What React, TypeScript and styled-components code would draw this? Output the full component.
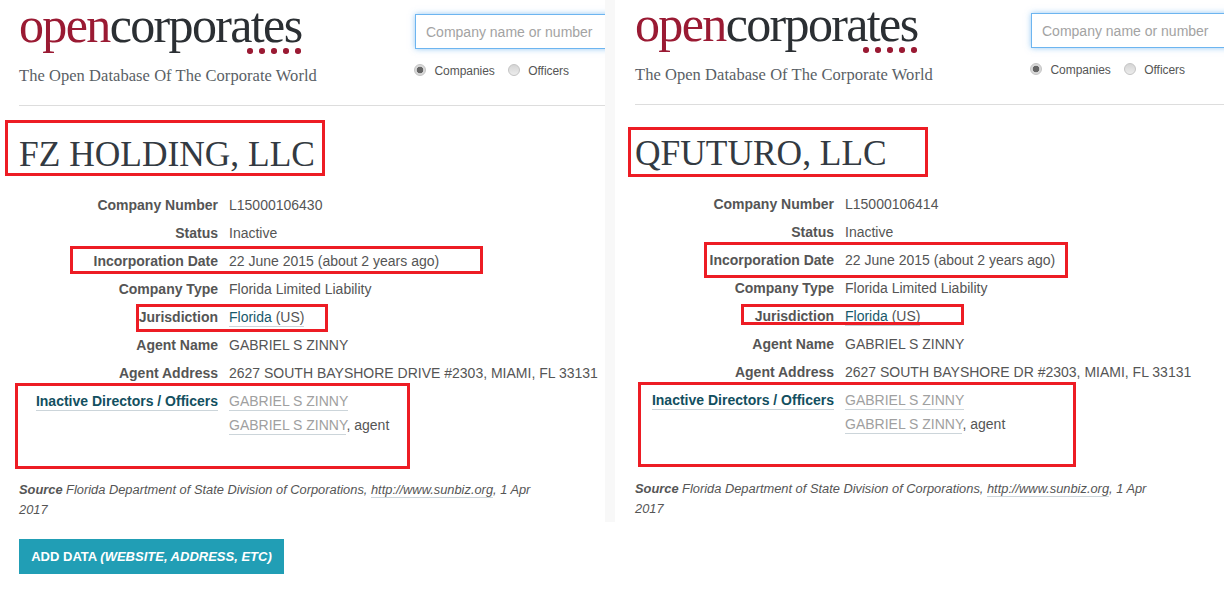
import React from 'react';
import styled, { createGlobalStyle } from 'styled-components';

type Row = { label: string; value: React.ReactNode };

// left, top, width, height of a marker drawn over the panel
type Box = [number, number, number, number];

type Company = {
  name: string;
  number: string;
  address: string;
  marks: Box[];
};

const companies: Company[] = [
  {
    name: 'FZ HOLDING, LLC',
    number: 'L15000106430',
    address: '2627 SOUTH BAYSHORE DRIVE #2303, MIAMI, FL 33131',
    marks: [
      [5, 120, 320, 56],
      [70, 246, 413, 28],
      [136, 304, 192, 28],
      [15, 383, 395, 86],
    ],
  },
  {
    name: 'QFUTURO, LLC',
    number: 'L15000106414',
    address: '2627 SOUTH BAYSHORE DR #2303, MIAMI, FL 33131',
    marks: [
      [13, 128, 300, 50],
      [89, 243, 364, 36],
      [126, 305, 223, 21],
      [23, 383, 438, 85],
    ],
  },
];

const CompanyPanel = ({ company, shifted }: { company: Company; shifted?: boolean }) => {
  const rows: Row[] = [
    { label: 'Company Number', value: company.number },
    { label: 'Status', value: 'Inactive' },
    { label: 'Incorporation Date', value: '22 June 2015 (about 2 years ago)' },
    { label: 'Company Type', value: 'Florida Limited Liability' },
    {
      label: 'Jurisdiction',
      value: (
        <JurisdictionLink>
          Florida <span>(US)</span>
        </JurisdictionLink>
      ),
    },
    { label: 'Agent Name', value: 'GABRIEL S ZINNY' },
    { label: 'Agent Address', value: company.address },
  ];

  return (
    <Panel $shifted={shifted}>
      <Header>
        <Brand>
          <Logo>
            <LogoOpen>open</LogoOpen>corporates
          </Logo>
          <LogoDots>
            <i />
            <i />
            <i />
            <i />
            <i />
          </LogoDots>
          <Tagline>The Open Database Of The Corporate World</Tagline>
        </Brand>
        <SearchArea>
          <SearchInput placeholder="Company name or number" readOnly />
          <RadioRow>
            <RadioLabel>
              <RadioDot $checked />
              Companies
            </RadioLabel>
            <RadioLabel>
              <RadioDot />
              Officers
            </RadioLabel>
          </RadioRow>
        </SearchArea>
      </Header>
      <Content>
        <Title>{company.name}</Title>
        <Attributes>
          {rows.map((row) => (
            <AttrRow key={row.label}>
              <AttrLabel>{row.label}</AttrLabel>
              <AttrValue>{row.value}</AttrValue>
            </AttrRow>
          ))}
          <AttrRow>
            <AttrLabel>
              <OfficersLink>Inactive Directors / Officers</OfficersLink>
            </AttrLabel>
            <OfficerList>
              <div>
                <OfficerLink>GABRIEL S ZINNY</OfficerLink>
              </div>
              <div>
                <OfficerLink>GABRIEL S ZINNY</OfficerLink>, agent
              </div>
            </OfficerList>
          </AttrRow>
        </Attributes>
        <Source>
          <strong>Source</strong> Florida Department of State Division of Corporations,{' '}
          <SourceLink>http://www.sunbiz.org</SourceLink>, 1 Apr
          <br />
          2017
        </Source>
      </Content>

      {company.marks.map(([left, top, width, height]) => (
        <RedBox key={top} $left={left} $top={top} $width={width} $height={height} />
      ))}
    </Panel>
  );
};

const App = () => (
  <>
    <GlobalStyle />
    <Page>
      <Columns>
        <CompanyPanel company={companies[0]} />
        <Gutter />
        <CompanyPanel company={companies[1]} shifted />
      </Columns>
      <AddDataButton>
        ADD DATA <em>(WEBSITE, ADDRESS, ETC)</em>
      </AddDataButton>
    </Page>
  </>
);

export default App;

const GlobalStyle = createGlobalStyle`
  html, body {
    margin: 0;
    padding: 0;
    background: #fff;
    overflow: hidden;
  }
  body {
    font-family: "Liberation Sans", Arial, sans-serif;
    font-size: 14px;
    color: #555;
  }
`;

const Page = styled.div`
  width: 1224px;
  height: 593px;
  overflow: hidden;
`;

const Columns = styled.div`
  display: grid;
  grid-template-columns: 605px 10px 609px;
  height: 522px;
`;

const Gutter = styled.div`
  background: #f8f8f8;
`;

const Panel = styled.section<{ $shifted?: boolean }>`
  position: relative;
  overflow: hidden;
  height: 522px;
  margin-top: ${(p) => (p.$shifted ? '-1px' : '0')};
  padding-left: ${(p) => (p.$shifted ? '1px' : '0')};
`;

const Header = styled.header`
  display: flex;
  justify-content: space-between;
  height: 105px;
  margin-left: 19px;
  border-bottom: 1px solid #ddd;
`;

const Brand = styled.div`
  display: flex;
  flex-direction: column;
  width: 396px;
  flex: none;
`;

const Logo = styled.div`
  font-family: "Liberation Serif", "Times New Roman", serif;
  font-size: 50px;
  line-height: 38px;
  margin: 6px 0 4px;
  letter-spacing: -1.64px;
  color: #2b2f33;
  white-space: nowrap;
`;

const LogoOpen = styled.span`
  color: #9a1a33;
`;

const LogoDots = styled.div`
  display: flex;
  gap: 6.6px;
  margin: 0 0 0 228px;
  height: 6px;

  i {
    display: block;
    width: 5.5px;
    height: 5.5px;
    border-radius: 50%;
    background: #9a1a33;
  }
`;

const Tagline = styled.div`
  font-family: "Liberation Serif", "Times New Roman", serif;
  font-size: 16.5px;
  line-height: 20px;
  margin-top: 12px;
  letter-spacing: 0.05px;
  color: #5a5f66;
  white-space: nowrap;
`;

const SearchArea = styled.div`
  flex: 1;
  padding-top: 14px;
  min-width: 210px;
`;

const SearchInput = styled.input`
  display: block;
  box-sizing: border-box;
  width: 260px;
  height: 35px;
  padding: 0 10px;
  border: 1px solid #6db5f0;
  box-shadow: 0 0 6px rgba(110, 180, 240, 0.7);
  outline: none;
  font-family: "Liberation Sans", Arial, sans-serif;
  font-size: 14px;
  color: #555;

  &::placeholder {
    color: #a3a3a3;
    opacity: 1;
  }
`;

const RadioRow = styled.div`
  display: flex;
  gap: 13px;
  margin: 15px 0 0 -1px;
`;

const RadioLabel = styled.label`
  display: flex;
  align-items: center;
  gap: 8.5px;
  font-size: 12px;
  line-height: 14px;
  letter-spacing: -0.05px;
  color: #555;
`;

const RadioDot = styled.span<{ $checked?: boolean }>`
  position: relative;
  top: -1.5px;
  display: block;
  width: 12px;
  height: 12px;
  box-sizing: border-box;
  border-radius: 50%;
  border: 1px solid #c4c4c4;
  background: ${(p) =>
    p.$checked
      ? 'radial-gradient(circle, #666 0 3px, #d8d8d8 3.6px)'
      : 'linear-gradient(#d5d5d5, #ececec)'};
`;

const Content = styled.div`
  padding-left: 19px;
`;

const Title = styled.h1`
  margin: 26px 0 0;
  font-family: "Liberation Serif", "Times New Roman", serif;
  font-size: 35.4px;
  line-height: 44px;
  font-weight: 400;
  color: #333a42;
  white-space: nowrap;
`;

const Attributes = styled.dl`
  margin: 15px 0 0;
  display: flex;
  flex-direction: column;
`;

const AttrRow = styled.div`
  display: grid;
  grid-template-columns: 199px 1fr;
  column-gap: 11px;
  min-height: 28px;
  line-height: 28px;
`;

const AttrLabel = styled.dt`
  margin: 0;
  text-align: right;
  font-weight: 700;
  color: #555;
  white-space: nowrap;
`;

const AttrValue = styled.dd`
  margin: 0;
  white-space: nowrap;
`;

const JurisdictionLink = styled.a`
  color: #17596b;
  border-bottom: 1px solid #ccd5da;
  padding-bottom: 1px;

  span {
    color: #555;
  }
`;

const OfficersLink = styled.a`
  color: #124f60;
  border-bottom: 1px solid #ccd5da;
  padding-bottom: 1px;
`;

const OfficerList = styled.dd`
  margin: 0;
  line-height: 24px;
  padding-top: 2px;
  white-space: nowrap;
`;

const OfficerLink = styled.a`
  color: #a0a0a0;
  border-bottom: 1px solid #ccd5da;
  padding-bottom: 1px;
`;

const Source = styled.p`
  width: 530px;
  margin: 43px 0 0;
  font-size: 12.85px;
  line-height: 19.5px;
  font-style: italic;
  color: #555;
`;

const SourceLink = styled.a`
  border-bottom: 1px solid #ccd5da;
  color: #555;
`;

const AddDataButton = styled.button`
  display: block;
  width: 265px;
  height: 35px;
  margin: 17px 0 0 19px;
  padding: 0 0 1px;
  border: 0;
  background: #219eb5;
  color: #fff;
  font-family: "Liberation Sans", Arial, sans-serif;
  font-size: 13px;
  font-weight: 700;
  text-align: center;
`;

const RedBox = styled.div<{ $left: number; $top: number; $width: number; $height: number }>`
  position: absolute;
  left: ${(p) => p.$left}px;
  top: ${(p) => p.$top}px;
  width: ${(p) => p.$width}px;
  height: ${(p) => p.$height}px;
  box-sizing: border-box;
  border: 3px solid #ed1c24;
  pointer-events: none;
`;
